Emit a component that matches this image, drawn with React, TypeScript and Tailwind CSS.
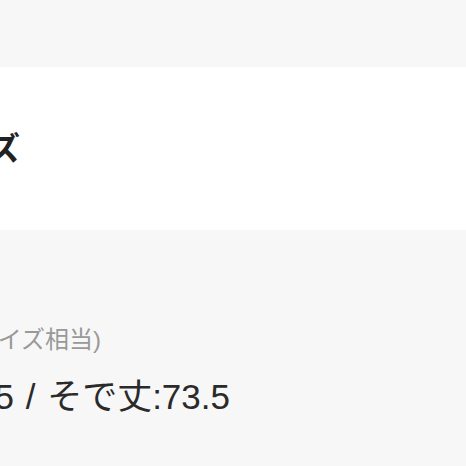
const font = "font-['Liberation_Sans','Noto_Sans_CJK_JP',sans-serif]";

const Tail = ({ width, className, children }: { width: string; className: string; children: string }) => (
  <div className={`flex justify-end ${width}`}>
    <span className={`shrink-0 whitespace-nowrap ${className}`}>{children}</span>
  </div>
);

const App = () => (
  <div className={`h-[466px] w-[466px] overflow-hidden bg-[#f7f7f7] ${font}`}>
    <div className="h-[67px]" />
    <section className="flex h-[163px] items-center bg-white">
      <Tail width="w-[20px]" className="text-[32px] font-bold leading-none text-[#222]">
        商品サイズ
      </Tail>
    </section>
    <div className="pt-[90px]">
      <Tail width="w-[101px]" className="h-10 text-[24px] leading-10 text-[#999]">
        (Lサイズ相当)
      </Tail>
      <Tail
        width="w-[230px]"
        className="mt-[17px] h-10 text-[35px] leading-10 text-[#2a2a2a] [word-spacing:2px]"
      >
        着丈:70.5 / 身幅:58.5 / そで丈:73.5
      </Tail>
    </div>
  </div>
);

export default App;
